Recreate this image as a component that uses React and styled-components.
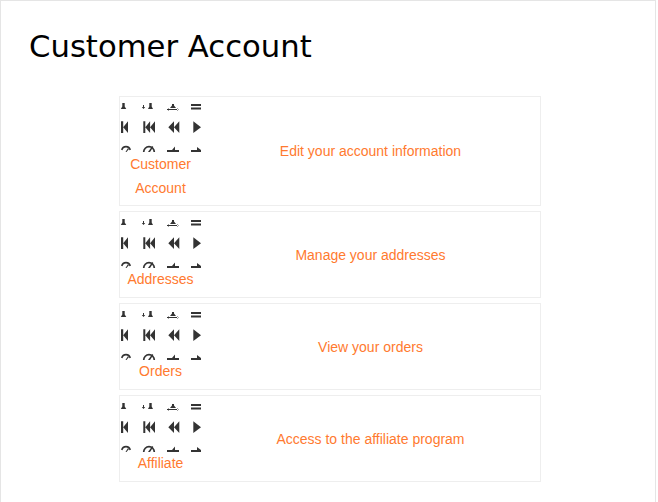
import React from "react";
import styled, { createGlobalStyle } from "styled-components";

const GlobalStyle = createGlobalStyle`
  html, body {
    margin: 0;
    padding: 0;
    background: #fff;
  }
`;

const Page = styled.div`
  box-sizing: border-box;
  width: 656px;
  height: 502px;
  border: 1px solid #e5e5e5;
  border-bottom: none;
  padding: 0 114px 0 118px;
`;

const Title = styled.h1`
  margin: 0 0 29.6px -90px;
  padding-top: 27px;
  font-family: "DejaVu Sans", Verdana, sans-serif;
  font-size: 30.7px;
  line-height: 38px;
  font-weight: 400;
  color: #000;
`;

const List = styled.div`
  display: flex;
  flex-direction: column;
  gap: 5px;
`;

const Card = styled.a`
  display: grid;
  grid-template-columns: 81px 1fr;
  align-items: center;
  border: 1px solid #eeeeee;
  padding: 6.8px 0 4.8px;
  font-family: "Liberation Sans", Arial, sans-serif;
  font-size: 14px;
  line-height: 1.7;
  color: #ff7a2f;
  text-align: center;
`;

const Label = styled.div`
  display: flex;
  flex-direction: column;
`;

const Description = styled.div`
  padding-top: ${(props) => (props.$wrapped ? 0 : 1.6)}px;
`;

const SpriteSvg = styled.svg`
  display: block;
  width: 81px;
  height: 49px;
  margin-bottom: 0.4px;
  fill: #333;
  stroke: #333;
  stroke-width: 0;
`;

// piece of the icon sprite that shows through the thumbnail box
const Sprite = () => (
  <SpriteSvg viewBox="0 0 81 49">
    <path d="M2.300 0h2.400v3.500L6.300 6H.8l1.500-2.500z" />
    <path d="M23 2h1v2h1.200l-1.700 2-1.700-2H23zM29.300 0h2.400v3.500L33 6h-5l1.300-2.500z" />
    <path d="M52 1h2v1.500l2 2.500h-6l2-2.500z" />
    <path d="M47 6h12v1H47zM47 6.500l2-1.300v2.600zM59 6.500l-2-1.300v2.600z" />
    <path d="M71 1h10v2H71zM71 4.500h10v2H71z" />

    <path d="M1 18.300h2.200v11.700H1zM3.200 24.200L8 18.300v11.700z" />
    <path d="M23.300 18.300h2v11.700h-2zM25.300 24.200l4.800-5.900v11.700zM30.100 24.200l4.900-5.900v11.700z" />
    <path d="M48.300 24.200l5.700-5.900v11.700zM54 24.200l5.300-5.900v11.700z" />
    <path d="M73.300 18.300l7.700 5.900-7.700 5.800z" />

    <path d="M1.800 47a4.300 4.300 0 0 1 8.400 0" fill="none" strokeWidth="1.600" />
    <path d="M5.500 49l2.500-4 1 1-2.500 3z" />
    <path d="M23.700 49a5.300 5.300 0 0 1 10.600 0" fill="none" strokeWidth="1.700" />
    <path d="M28 49l4.300-6 1 1-3.300 5z" />
    <path d="M47 47h5l3-3.500V47h4v2H47z" />
    <path d="M71 47h6v-3l4 3v2H71z" />
  </SpriteSvg>
);

const accounts = [
  { name: "Customer Account", text: "Edit your account information", wrapped: true },
  { name: "Addresses", text: "Manage your addresses" },
  { name: "Orders", text: "View your orders" },
  { name: "Affiliate", text: "Access to the affiliate program" },
];

const App = () => (
  <Page>
    <GlobalStyle />
    <Title>Customer Account</Title>
    <List>
      {accounts.map((item) => (
        <Card key={item.name}>
          <Label>
            <Sprite />
            {item.name}
          </Label>
          <Description $wrapped={item.wrapped}>{item.text}</Description>
        </Card>
      ))}
    </List>
  </Page>
);

export default App;
